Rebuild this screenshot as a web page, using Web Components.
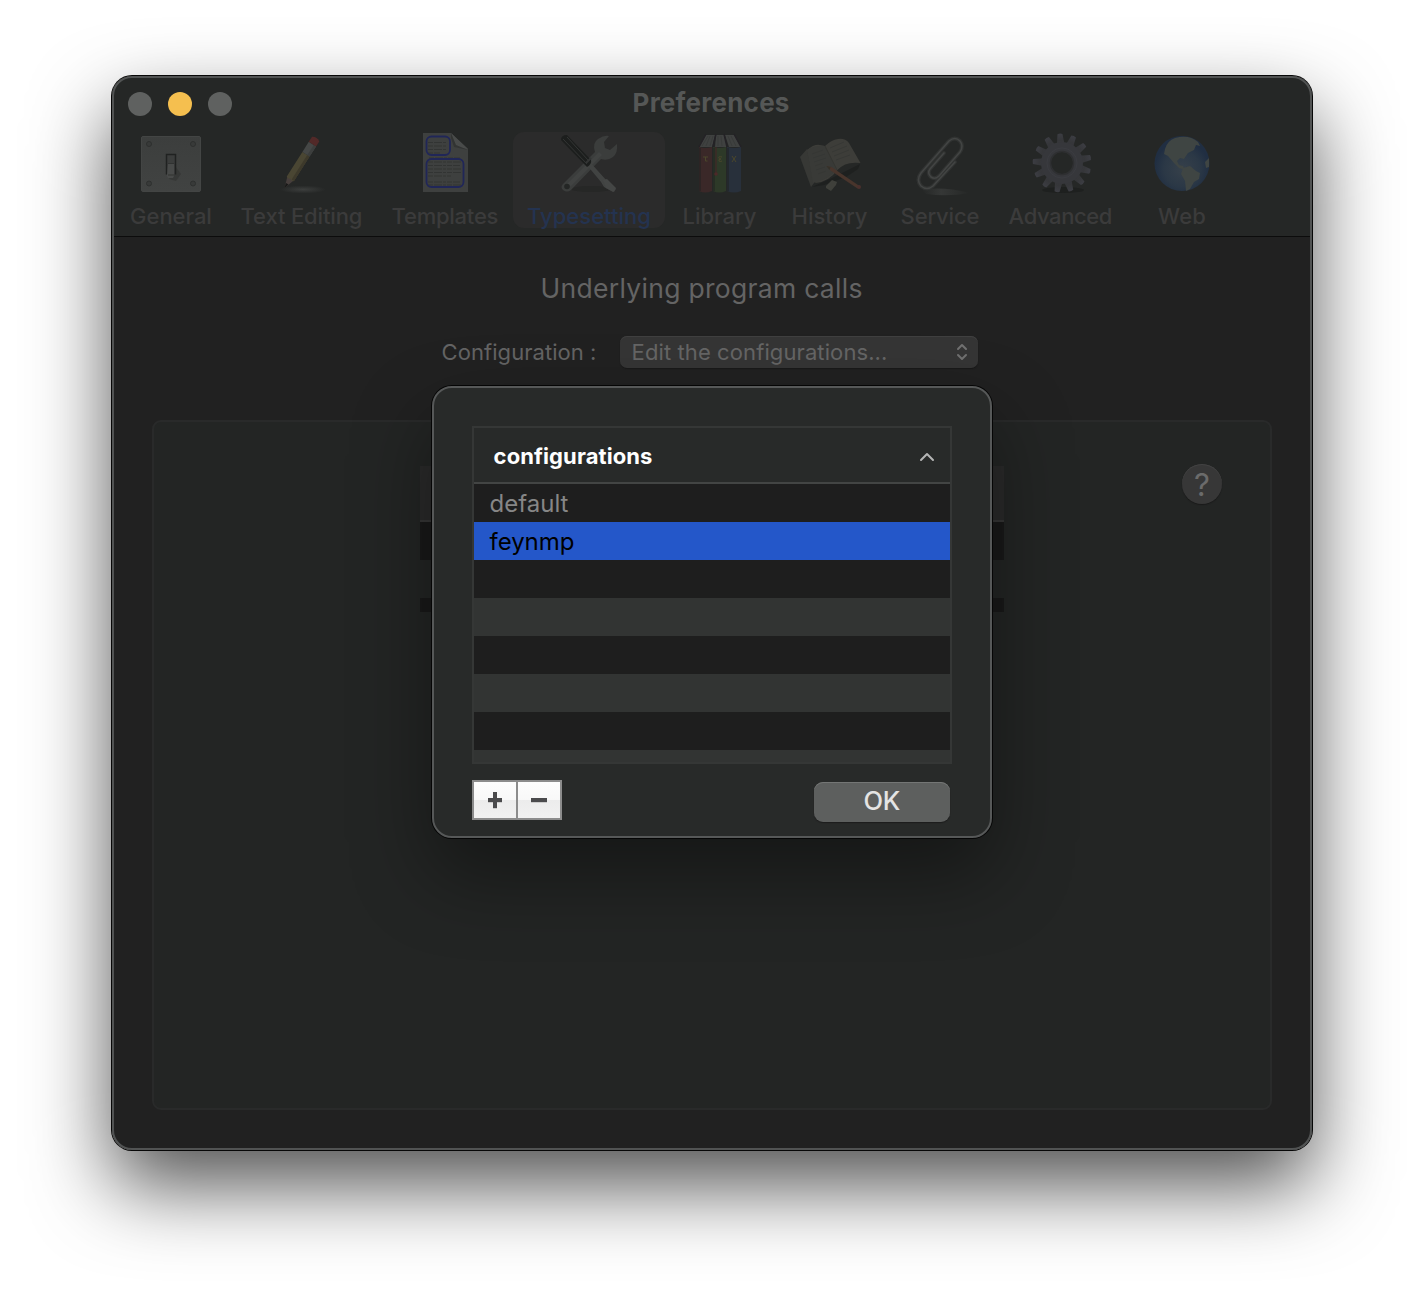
<!DOCTYPE html>
<html lang="en">
<head>
<meta charset="utf-8">
<title>Preferences</title>
<style>
html,body{margin:0;height:100%;background:#fff;overflow:hidden}
body{font-family:Inter,"Liberation Sans",sans-serif;-webkit-font-smoothing:antialiased}
</style>
</head>
<body>
<pref-window></pref-window>

<template id="t-window">
<style>
:host{display:block;padding:76px 112px;box-sizing:border-box;width:1424px;height:1298px}
.win{position:relative;width:1200px;height:1074px;border-radius:20px;background:#212121;overflow:hidden}
.shade{border-radius:20px;width:1200px;height:1074px;box-shadow:0 0 0 1px #070707,0 36px 80px rgba(0,0,0,.68)}
.edge{position:absolute;inset:0;border-radius:20px;border:2px solid #515353;pointer-events:none}
header{height:160px;background:#252726;border-bottom:1px solid #0c0c0c;box-sizing:content-box}
.bar{display:flex;align-items:center;height:56px;padding-left:16px;gap:16px}
.bar i{width:24px;height:24px;border-radius:50%;background:#5f6160}
.bar i.y{background:#f5bf4f}
.bar fit-label{margin-left:385px;margin-top:-2px}
nav{display:flex;padding-left:4px}
.title{display:flex;padding:30px 0 0 429px}
.row{display:flex;align-items:center;padding:26px 0 0 330px;height:34px}
.row pop-up{margin-left:24px}
</style>
<div class="shade"><div class="win">
<header>
<div class="bar"><i></i><i class="y"></i><i></i><fit-label w="156" style="font:700 26px/32px Inter;color:#555756">Preferences</fit-label></div>
<nav>
<tool-item style="width:110px" w="81" label="General"><svg viewBox="0 0 64 64"><defs><linearGradient id="a" x2="0" y2="1"><stop stop-color="#3c3e3d"/><stop offset="1" stop-color="#414342"/></linearGradient></defs><rect x="2.500" y="4.500" width="59" height="55" rx="1.500" fill="url(#a)" stroke="#434544"/><g fill="#383a39" stroke="#2e302f"><circle cx="10" cy="12" r="2.500"/><circle cx="54" cy="12" r="2.500"/><circle cx="10" cy="51.500" r="2.500"/><circle cx="54" cy="51.500" r="2.500"/></g><path d="M36 34l6 8-5 7-7-2z" fill="#303231" opacity=".6"/><path d="M27.500 42.500V22.500h9v20" fill="#3b3d3c" stroke="#202221" stroke-width="1.500"/><path d="M29 32h6v12l-1 2h-5l-1-2z" fill="#484a49"/><path d="M29 31.500h6M29 43h6" stroke="#303231"/></svg></tool-item>
<tool-item style="width:151px" w="121" label="Text Editing"><svg viewBox="0 0 64 64"><defs><radialGradient id="ps"><stop stop-color="#3c3e3d"/><stop offset="1" stop-color="#3c3e3d" stop-opacity="0"/></radialGradient></defs><ellipse cx="33" cy="57.500" rx="23" ry="4" fill="url(#ps)"/><g transform="translate(14.500 56) rotate(32.500)"><path d="M0 0l-4-12h8z" fill="#463e3c"/><path d="M0 0l-1.500-5h3z" fill="#181918"/><path d="M-4.300-11v-29h8.600v29q-2 2-4.300 0-2.300 2-4.300 0z" fill="#4a4633"/><path d="M1.500-11v-29h2.800v29z" fill="#3d392b"/><path d="M-4.300-52v-0h8.600v12h-8.600z" fill="#454746"/><path d="M1.500-52h2.800v12H1.500z" fill="#3c3e3d"/><path d="M-4.300-52v-6q4-3 8.600 0v6z" fill="#522928"/></g></svg></tool-item>
<tool-item style="width:136px" w="106" label="Templates"><svg viewBox="0 0 64 64"><path d="M10 1h28l17 16v43H10z" fill="#3e403f"/><path d="M38 1l17 16-13-2z" fill="#494b4a"/><path d="M38 1v5l3 9 14 3-12-5z" fill="#323433"/><g stroke="#323433" stroke-width="1.200" stroke-dasharray="5 1 8 1 3 1"><path d="M15 10.500h18M15 14h19M15 17.500h18M15 21h12M16 26h31M15 30h33M15 33.500h32M15 37h34M15 40.500h33M15 44h23M15 50h32M15 53h34"/></g><g fill="none" stroke="#202658" stroke-width="1.800"><rect x="13.500" y="4.500" width="23.500" height="18.500" rx="5"/><rect x="13.500" y="27" width="37" height="28" rx="5"/></g></svg></tool-item>
<tool-item style="width:152px" w="123" label="Typesetting" selected><svg viewBox="0 0 64 64"><ellipse cx="34" cy="57" rx="20" ry="3" fill="#262726"/><g><path d="M6 52L38 20q-3-9 3-13 6-4 11-3l-5 6 1 6 5 2 7-6q1 9-4 13-5 4-12 2L14 58q-4 3-8 0-3-3 0-6z" fill="#3b3d3c"/><path d="M9 53L42 20l3 3-31 31z" fill="#414342"/><circle cx="10" cy="54.500" r="2.800" fill="#242625"/></g><path d="M32 29l18 20 9 8-3 3-9-5-3-5-15-18z" fill="#414342"/><path d="M46 48l4-1 9 9-2 4-8-4z" fill="#444645"/><path d="M4 8q0-5 6-5l24 25q1 4-4 7z" fill="#1c1e1d"/><path d="M6 7l24 25M10 5l21 23" stroke="#333534" stroke-width="1"/><path d="M29 31l5-5" stroke="#333534" stroke-width="2"/></svg></tool-item>
<tool-item style="width:109px" w="73" label="Library"><svg viewBox="0 0 64 64"><g transform="translate(1 1)"><path d="M10 14L17 2h9l-3 12zM26 14l1-12h8l3 12zM40 14L36 2h9l7 12z" fill="#3f4140"/><path d="M13 13l6-10M17 13l4-10M21 13l3-10M29 13V3M33 13l-1-10M43 13L39 3M47 13L42 3" stroke="#383a39"/><path d="M10 14L17 1M24 14L27 1M38 14L35 1M52 14L45 1" stroke="#242226" stroke-width="1.500"/><path d="M10 14q6 2 13 0v44q-7 3-13 0z" fill="#3a2828"/><path d="M24 14q7 2 13 0v44q-7 3-13 0z" fill="#2d3928"/><path d="M38 14q7 2 14 0v44q-7 3-14 0z" fill="#28303b"/><path d="M11 15v43M25 15v43M39 15v43" stroke="#202221" opacity=".5" stroke-width="2"/><path d="M27 14v26" stroke="#402626" stroke-width="1.200"/><circle cx="27" cy="41" r="1.800" fill="#4d2929"/><g fill="none" stroke="#4b472b" stroke-width="1"><path d="M14 24h5M16.500 24v4h2M33 24q-4-1-3 1 0 1 2 1-3 0-2 2 1 1 3 0M43 23l4 6M47 23l-4 6"/></g></g></svg></tool-item>
<tool-item style="width:111px" w="75" label="History"><svg viewBox="0 0 64 64"><path d="M14 55l20-9 28-14-2 5-12 8-22 8z" fill="#1e201f"/><path d="M2 25l7-8 7 34-3 4z" fill="#373835"/><path d="M9 18q7-6 13-5l5 1q6-6 13-7 7-1 11 4l11.500 20q-15-2-23 7-9 12-22 13z" fill="#3d3d39"/><path d="M27 14l11 24q-8 10-23 13L9 18q9-5 18-4z" fill="#393a37"/><path d="M27 14l12 24" stroke="#333430"/><path d="M14 22l11-4M15 26l12-4M16 30l12-4M17 34l8-3M18 38l9-3M20 42l8-3M32 16l14-6M34 20l15-6M36 24l15-6M38 28l14-5" stroke="#353633" stroke-width=".8"/><path d="M28.500 34l5 1 28 19-2 2.500-27-18z" fill="#49352c"/><path d="M28.500 34l4 1-1 3z" fill="#343129"/><circle cx="61" cy="55" r="2" fill="#4b302d"/><path d="M28 54l6-6 5 2-1 3-5 6-5-3z" fill="#3f403b"/></svg></tool-item>
<tool-item style="width:110px" w="78" label="Service"><svg viewBox="0 0 64 64"><defs><linearGradient id="cs"><stop stop-color="#353736" stop-opacity="0"/><stop offset=".4" stop-color="#353736"/><stop offset="1" stop-color="#353736" stop-opacity="0"/></linearGradient></defs><path d="M14 58q20-4 48 3-22 4-44 1z" fill="url(#cs)"/><g fill="none" stroke-linecap="round" stroke-linejoin="round"><path d="M47 30L25 54q-6 5-12 0-5-6 0-13L41 9q6-5 11 0 4 5 0 11L31 44q-4 4-8 1-4-4-1-8L36 21" stroke="#303231" stroke-width="4"/><path d="M47 30L25 54q-6 5-12 0-5-6 0-13L41 9q6-5 11 0 4 5 0 11L31 44q-4 4-8 1-4-4-1-8L36 21" stroke="#424443" stroke-width="1.600"/></g></svg></tool-item>
<tool-item style="width:131px" w="103" label="Advanced"><svg viewBox="0 0 64 64"><defs><linearGradient id="gg" x2="0" y2="1"><stop stop-color="#3c3d43"/><stop offset=".55" stop-color="#353639"/><stop offset="1" stop-color="#38393e"/></linearGradient></defs><ellipse cx="34" cy="58" rx="21" ry="3" fill="#1e201f"/><g id="teeth" fill="url(#gg)"></g><circle cx="33" cy="31" r="16" fill="none" stroke="#36373b" stroke-width="10"/><circle cx="33" cy="31" r="15" fill="none" stroke="#3b3c41" stroke-width="1"/><circle cx="33" cy="31" r="11.500" fill="none" stroke="#2e2f31" stroke-width="1.500"/></svg></tool-item>
<tool-item style="width:112px" w="47" label="Web"><svg viewBox="0 0 64 64"><defs><radialGradient id="gl" cy=".6"><stop stop-color="#36404a"/><stop offset=".65" stop-color="#2b3846"/><stop offset="1" stop-color="#202e42"/></radialGradient></defs><circle cx="32" cy="31.500" r="27.500" fill="url(#gl)"/><path d="M15 17q2-8 10-11 14-4 23 4l2 4-4-1-2 5-6 3-4 6-4-1-3 3 2 4 4 1 2 4-6-2-5-5-6-7-4-2z" fill="#3f4543"/><path d="M33 36l7-2 6 5 4 2-1 6-5 3-4 7-4 2-1-10-4-7zM55 30l4-4v9l-3 1z" fill="#3f4543"/></svg></tool-item>
</nav>
</header>
<main>
<div class="title"><fit-label w="321" style="font:400 26.500px/42px Inter;color:#646464">Underlying program calls</fit-label></div>
<div class="row"><fit-label w="154" style="font:400 22px/32px Inter;color:#646464">Configuration :</fit-label><pop-up></pop-up></div>
<group-box></group-box>
</main>
<div class="edge"></div>
<config-sheet></config-sheet>
</div></div>
</template>

<template id="t-tool">
<style>
:host{display:flex;flex-direction:column;align-items:center;height:96px;border-radius:11px;box-sizing:border-box;color:#3b3b3b}
:host([selected]){background:#2b2b2b;color:#243350}
::slotted(svg){width:64px;height:64px;display:block;flex:none}
fit-label{font:500 22px/30px Inter;margin-top:5px}
</style>
<slot></slot><fit-label></fit-label>
</template>

<template id="t-popup">
<style>
:host{display:flex;align-items:center;width:358px;height:32px;box-sizing:border-box;padding:0 9px 0 12px;border-radius:7px;background:#353535;box-shadow:inset 0 1px #404040,0 1px 1px #191919;justify-content:space-between}
svg{width:14px;height:20px}
</style>
<fit-label w="255" style="font:400 22px/32px Inter;color:#656565">Edit the configurations...</fit-label>
<svg viewBox="0 0 14 20" fill="none" stroke="#717171" stroke-width="2" stroke-linecap="round" stroke-linejoin="round"><path d="M3 7l4-4 4 4M3 13l4 4 4-4"/></svg>
</template>

<template id="t-group">
<style>
:host{display:flex;margin:51px 0 0 40px;width:1120px;height:690px;border-radius:9px;border:2px solid #292a2a;box-sizing:border-box;background:#232524;padding:42px 48px 0 266px;justify-content:space-between}
.tbl{width:584px;height:146px;margin-top:2px;display:flex;flex-direction:column}
.tbl b{height:54px;background:#2a2a2a;border-bottom:2px solid #363636}
.tbl i{height:38px;background:#191919}.tbl i+i{background:#232524}.tbl i+i+i{height:14px;background:#191919}
.help{width:40px;height:40px;border-radius:50%;background:#373737;box-shadow:inset 0 1px #424242,0 1px 1px #1a1a1a;font:400 31px/41px Inter;text-align:center;color:#6b6b6b}
</style>
<div class="tbl"><b></b><i></i><i></i><i></i></div><div class="help">?</div>
</template>

<template id="t-sheet">
<style>
:host{position:absolute;left:320px;top:310px;width:560px;height:452px;box-sizing:border-box;border:2px solid #565858;border-radius:20px;background:#282a29;box-shadow:0 0 0 1px #050505,0 36px 80px rgba(0,0,0,.4);padding:38px 38px 0;display:block}
.table{width:480px;height:338px;box-sizing:border-box;border:2px solid #353736;overflow:hidden;background:#282a29}
.head{display:flex;align-items:center;justify-content:space-between;height:54px;border-bottom:2px solid #434544;padding:0 15px 0 20px;color:#fff}
.head fit-label{margin-top:2px}
.head svg{width:16px;height:12px;margin-top:3px}
.r{height:38px;padding-left:16px;background:#1e1e1e;display:flex;align-items:center}
.r fit-label{margin-top:2px}
.r:nth-child(odd){background:#323433}
.r.sel{background:#2457c9}
.foot{display:flex;justify-content:space-between;padding:16px 2px 0 0}
.pm{display:flex;width:90px;height:40px;box-sizing:border-box;border:2px solid #8c8c8c;background:linear-gradient(#fdfdfd 0,#f8f8f8 50%,#ececec 50%,#f1f1f1)}
.pm span{flex:1;display:flex;align-items:center;justify-content:center}
.pm span+span{border-left:2px solid #8c8c8c}
.pm svg{width:16px;height:18px;filter:drop-shadow(0 1px #ccc)}
.ok{margin-top:2px;width:136px;height:40px;border-radius:9px;background:#5d5f5e;box-shadow:inset 0 1px #747675,0 1px 1px #1c1c1c;display:flex;justify-content:center}
</style>
<div class="table">
<div class="head"><fit-label w="158" style="font:700 22px/32px Inter">configurations</fit-label><svg viewBox="0 0 16 12" fill="none" stroke="#b4b5b5" stroke-width="2" stroke-linecap="round" stroke-linejoin="round"><path d="M2 9l6-6 6 6"/></svg></div>
<div class="r" style="background:#1e1e1e"><fit-label w="78" style="font:400 24px/36px Inter;color:#868686">default</fit-label></div>
<div class="r sel"><fit-label w="84" style="font:400 24px/36px Inter;color:#000">feynmp</fit-label></div>
<div class="r" style="background:#1e1e1e"></div><div class="r" style="background:#323433"></div><div class="r" style="background:#1e1e1e"></div><div class="r" style="background:#323433"></div><div class="r" style="background:#1e1e1e"></div><div class="r" style="background:#323433"></div>
</div>
<div class="foot"><div class="pm"><span><svg viewBox="0 0 16 18"><path d="M1 7h5V1h4v6h5v4h-5v6H6v-6H1z" fill="#4b4b4d"/></svg></span><span><svg viewBox="0 0 16 18"><path d="M0 7h16v4H0z" fill="#4b4b4d"/></svg></span></div>
<div class="ok"><fit-label w="36" style="font:500 25.500px/38px Inter;color:#e4e4e4">OK</fit-label></div></div>
</template>

<script>
const stamp = (el, id) => {
  const root = el.attachShadow({mode:'open'});
  root.appendChild(document.getElementById(id).content.cloneNode(true));
  return root;
};
// A single-line label whose tracking is adjusted to fill the width in its "w" attribute.
class FitLabel extends HTMLElement {
  connectedCallback() {
    if (!this.shadowRoot) this.attachShadow({mode:'open'}).innerHTML =
      '<style>:host{display:inline-block;white-space:pre;flex:none}span{display:inline-block}</style><span><slot></slot></span>';
    this.fit();
  }
  fit() {
    const w = +this.getAttribute('w'), n = this.textContent.length;
    if (!w || !n) return;
    const span = this.shadowRoot.querySelector('span');
    const natural = span.getBoundingClientRect().width;
    const side = 0.8;
    span.style.letterSpacing = ((w + side - natural) / (n - 1)) + 'px';
    this.style.width = w + 'px';
    span.style.marginLeft = (-side / 2) + 'px';
  }
}
class ToolItem extends HTMLElement {
  connectedCallback() {
    const label = stamp(this, 't-tool').querySelector('fit-label');
    label.textContent = this.getAttribute('label');
    label.setAttribute('w', this.getAttribute('w'));
    if (label.fit) label.fit();
  }
}
class PopUp extends HTMLElement { connectedCallback() { stamp(this, 't-popup'); } }
class GroupBox extends HTMLElement { connectedCallback() { stamp(this, 't-group'); } }
class ConfigSheet extends HTMLElement { connectedCallback() { stamp(this, 't-sheet'); } }
class PrefWindow extends HTMLElement {
  connectedCallback() {
    const root = stamp(this, 't-window');
    let teeth = '';
    for (let i = 0; i < 13; i++)
      teeth += `<path transform="rotate(${i * 360 / 13 - 4} 33 31)" d="M29 14L30.500 2q2.500-1 5 0L37 14z"/>`;
    root.getElementById('teeth').innerHTML = teeth;
  }
}
customElements.define('pref-window', PrefWindow);
customElements.define('tool-item', ToolItem);
customElements.define('pop-up', PopUp);
customElements.define('group-box', GroupBox);
customElements.define('config-sheet', ConfigSheet);
customElements.define('fit-label', FitLabel);
</script>
</body>
</html>
